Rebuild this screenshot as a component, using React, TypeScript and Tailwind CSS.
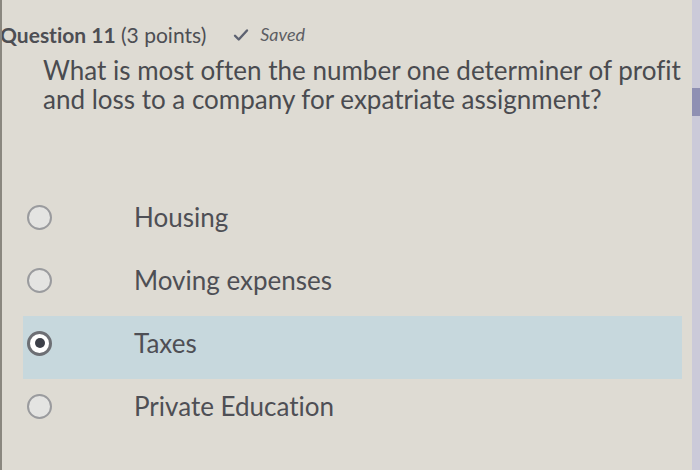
export default function App() {
  const options = ['Housing', 'Moving expenses', 'Taxes', 'Private Education'];
  const selected = 2;

  return (
    <div
      className="relative w-[700px] h-[470px] overflow-hidden bg-[#dedbd3] text-[#4d4e53] border-l-2 border-[#8a877f] [font-variant-ligatures:none]"
      style={{ fontFamily: 'Lato, "Open Sans", sans-serif' }}
    >
      {/* right strip + scrollbar */}
      <div className="absolute right-0 top-0 h-full w-[8px] bg-[#cbcad9]">
        <div className="mt-[88px] h-[28px] w-full bg-[#8f90b3]" />
      </div>

      <div className="flex items-center pt-[21px] h-[48px] -ml-[2px]">
        <span className="text-[21px] leading-none">
          <span className="font-bold">Question 11</span> (3 points)
        </span>
        <span className="ml-[26px] flex items-center gap-[10px] text-[18px] italic text-[#5d5e63]">
          <svg className="w-[18px] h-[18px]" viewBox="0 0 24 24" fill="none" stroke="#5d6271" strokeWidth={3.2} strokeLinecap="round" strokeLinejoin="round">
            <path d="M4 13l5 5L20 6" />
          </svg>
          Saved
        </span>
      </div>

      <p className="ml-[41px] mt-[8px] text-[26px] leading-[29px] text-[#4a4b50]">
        What is most often the number one determiner of profit
        <br />
        and loss to a company for expatriate assignment?
      </p>

      <div className="mt-[76px] ml-[21px] w-[659px] flex flex-col">
        {options.map((opt, i) => (
          <div
            key={opt}
            className={`flex items-center h-[63px] pb-[9px] ${i === selected ? 'bg-[#c7d8dd]' : ''}`}
          >
            <div className="w-[111px] flex items-center pl-[4px]">
              <span
                className={`w-[25px] h-[25px] rounded-full flex items-center justify-center ${
                  i === selected ? 'border-[3px] border-[#6d6f74] bg-white' : 'border-[2px] border-[#9a9b9e] bg-[#e4e4e2]'
                }`}
              >
                {i === selected && <span className="w-[10px] h-[10px] rounded-full bg-[#3c3f48]" />}
              </span>
            </div>
            <span className="text-[26px] text-[#4e4f55]">{opt}</span>
          </div>
        ))}
      </div>
    </div>
  );
}
